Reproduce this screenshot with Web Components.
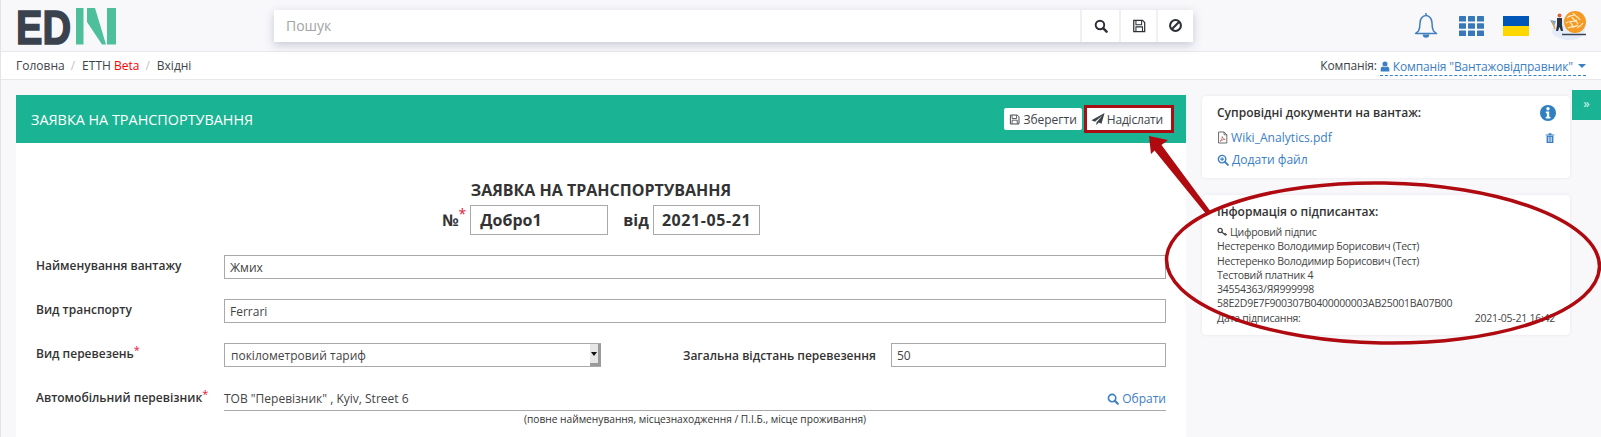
<!DOCTYPE html>
<html lang="uk">
<head>
<meta charset="utf-8">
<title>EDIN</title>
<style>
  html, body { margin: 0; height: 437px; overflow: hidden; background: #f8f8fb; }
  body { font-family: "Open Sans", "Noto Sans", sans-serif; font-size: 12px; color: #333; }
</style>
</head>
<body>
<edin-app></edin-app>

<script>
(function () {
  const icons = {
    search: '<svg viewBox="0 0 16 16"><circle cx="6.8" cy="6.8" r="4.9" fill="none" stroke="currentColor" stroke-width="2.2"/><path d="M10.4 10.4l4 4" stroke="currentColor" stroke-width="2.8" stroke-linecap="round"/></svg>',
    save: '<svg viewBox="0 0 16 16"><path d="M2 1.5h10l2.5 2.5v10.5h-12.5z" fill="none" stroke="currentColor" stroke-width="1.4"/><path d="M4.5 2v4.5h6.5v-4.5M4.5 14v-5h7.5v5" fill="none" stroke="currentColor" stroke-width="1.2"/></svg>',
    ban: '<svg viewBox="0 0 16 16"><circle cx="8" cy="8" r="5.8" fill="none" stroke="currentColor" stroke-width="2.2"/><path d="M4 12l8-8" stroke="currentColor" stroke-width="2.2"/></svg>',
    plane: '<svg viewBox="0 0 16 16"><path d="M15.5 1L.5 9.5l4 1.7L13 4 6.2 12v3l2.5-2.9 3.3 1.4z" fill="currentColor"/></svg>',
    pdf: '<svg viewBox="0 0 14 16"><path d="M2 1h7l3.5 3.5V15H2z" fill="none" stroke="currentColor" stroke-width="1.1"/><path d="M9 1v3.5h3.5" fill="none" stroke="currentColor"/><path d="M3.8 12.8c2-1 3-3.6 2.9-6 .9 2.3 1.9 3.4 3.7 3.7-2.2 0-4.5.9-6.6 2.3z" fill="none" stroke="#b5544f" stroke-width=".9"/></svg>',
    zoomin: '<svg viewBox="0 0 16 16"><circle cx="6.8" cy="6.8" r="5" fill="none" stroke="currentColor" stroke-width="1.9"/><path d="M10.5 10.5l4 4" stroke="currentColor" stroke-width="2.6" stroke-linecap="round"/><path d="M4.2 6.8h5.2M6.8 4.2v5.2" stroke="currentColor" stroke-width="1.5"/></svg>',
    trash: '<svg viewBox="0 0 14 16"><path d="M1 3h12v1.5H1zM5 1.2h4V3H5z" fill="currentColor"/><path d="M2.2 5h9.6v10H2.2z" fill="currentColor"/><path d="M5 6.5v7M7 6.5v7M9 6.5v7" stroke="#fff" stroke-width=".9"/></svg>',
    info: '<svg viewBox="0 0 16 16"><circle cx="8" cy="8" r="8" fill="currentColor"/><circle cx="8" cy="3.8" r="1.7" fill="#fff"/><path d="M5.8 6.5h3.4v5.2h1.2v1.8H5.8v-1.8h1.1V8.3H5.8z" fill="#fff"/></svg>',
    user: '<svg viewBox="0 0 12 14"><circle cx="6" cy="3.8" r="3.2" fill="currentColor"/><path d="M.5 13.5v-3c0-2.5 1.5-3.5 2.8-3.5.8.7 1.7 1 2.7 1s1.9-.3 2.7-1c1.3 0 2.8 1 2.8 3.500v3z" fill="currentColor"/></svg>',
    key: '<svg viewBox="0 0 14 12"><circle cx="4" cy="4" r="2.7" fill="none" stroke="currentColor" stroke-width="1.7"/><path d="M6 6l5 4M9.5 8.8l1.6-1.3M11 10l1.5-1.3" stroke="currentColor" stroke-width="1.6"/></svg>'
  };

  const ico = (name, w, h) => `<span style="display:inline-flex;width:${w}px;height:${h}px;flex:none">${icons[name].replace('<svg ', `<svg width="${w}" height="${h}" `)}</span>`;

  function define(tag, css, html) {
    const template = document.createElement('template');
    template.innerHTML = `<style>${css}</style>${html}`;
    customElements.define(tag, class extends HTMLElement {
      constructor() {
        super();
        this.attachShadow({ mode: 'open' });
        this.shadowRoot.appendChild(template.content.cloneNode(true));
      }
    });
  }

  // top bar
  define('edin-topbar', `
    :host { display: flex; align-items: center; height: 51px; border-bottom: 1px solid #e7e7ec; box-sizing: content-box; padding-left: 13px; }
    .logo { flex: none; width: 102px; height: 60px; margin: -5px 0; }
    .search { flex: none; display: flex; width: 919px; height: 32px; margin-left: 158px; background: #fff; box-shadow: 0 3px 9px rgba(70,80,110,.28); }
    .search .q { flex: 1; padding-left: 12px; font-size: 14px; line-height: 32px; color: #a4a4a4; }
    .search .b { flex: none; display: flex; align-items: center; justify-content: center; border-left: 2px solid #f0f0f0; color: #2d3036; box-sizing: border-box; }
    .icons { flex: none; display: flex; align-items: center; margin-left: 221px; }
  `, `
    <svg class="logo" viewBox="-4 -11 102 60" role="img" aria-label="EDIN">
      <text x="-2" y="37" font-family="Liberation Sans" font-weight="700" font-size="48" fill="#3a424e" stroke="#3a424e" stroke-width="1.6" textLength="55" lengthAdjust="spacingAndGlyphs">ED</text>
      <rect x="58" y="1" width="7.5" height="36.5" fill="#4dbf9b"/>
      <path d="M69 1h8l11 36.500h-4L69 15z" fill="#4dbf9b"/>
      <rect x="89" y="1" width="9" height="36.5" fill="#4dbf9b"/>
    </svg>
    <div class="search">
      <div class="q">Пошук</div>
      <div class="b" style="width:39px">${ico('search', 14, 14)}</div>
      <div class="b" style="width:37px">${ico('save', 14, 14)}</div>
      <div class="b" style="width:37px">${ico('ban', 15, 15)}</div>
    </div>
    <div class="icons">
      <svg width="24" height="27" viewBox="0 0 24 27" fill="none" stroke="#3f7fbf" stroke-width="1.5"><path d="M12 1v2.5M4.5 19c1-2 1.500-4 1.500-8 0-4 2.500-7.500 6-7.500s6 3.500 6 7.500c0 4 .5 6 1.500 8l3 2.500H1.500z" stroke-linejoin="round"/><path d="M9.500 22.500a2.500 2.500 0 0 0 5 0" fill="#3f7fbf"/></svg>
      <svg style="margin-left:21px" width="25" height="20" viewBox="0 0 25 20" fill="#3877b8"><rect width="7" height="5.5" rx=".6"/><rect x="9" width="7" height="5.5" rx=".6"/><rect x="18" width="7" height="5.5" rx=".6"/><rect y="7.2" width="7" height="5.5" rx=".6"/><rect x="9" y="7.2" width="7" height="5.5" rx=".6"/><rect x="18" y="7.2" width="7" height="5.5" rx=".6"/><rect y="14.5" width="7" height="5.5" rx=".6"/><rect x="9" y="14.5" width="7" height="5.5" rx=".6"/><rect x="18" y="14.5" width="7" height="5.5" rx=".6"/></svg>
      <svg style="margin-left:19px" width="26" height="20" viewBox="0 0 26 20"><rect width="26" height="10" fill="#0057b7"/><rect y="10" width="26" height="10" fill="#ffd700"/></svg>
      <svg style="margin-left:20px" width="38" height="33" viewBox="0 0 38 33">
        <path d="M3 22c0-6 8-9 13-14 5-6 14-8 18-2 4 7 3 17-1 21-5 5-14 5-20 3-5-2-10-3-10-8z" fill="#e4ecfa"/>
        <circle cx="26" cy="13" r="11" fill="#f59a23"/>
        <path d="M18 9c3-4 6-1 8-4M17 14c4-3 7 0 11-3M19 19c3-2 6 0 10-3M24 4c2 4 5 3 7 7M23 8c1 3 4 3 6 7M21 13c2 2 3 3 3 6M28 19c2-1 4-2 6-5" fill="none" stroke="#fdeccd" stroke-width="1.2"/>
        <path d="M13 25.5h24" stroke="#3b4453" stroke-width="1.5"/>
        <path d="M8 9h5v7l1 6h-2l-1.5-4-1.5 4H7l1-6z" fill="#2b3442"/>
        <circle cx="10.5" cy="6.5" r="2" fill="#d8623f"/>
        <path d="M1 11l6 1-2 6z" fill="#6fa6dc"/><path d="M3 12l3 8" stroke="#e0a13a" stroke-width="1.2"/>
      </svg>
    </div>
  `);

  // breadcrumb bar
  define('edin-breadcrumb', `
    :host { display: flex; align-items: center; height: 27px; padding: 0 15px; background: #fff; border-bottom: 1px solid #e7e7ec; white-space: nowrap; color: #3d4348; }
    .sep { color: #c4c4c4; margin: 0 7px 0 6px; }
    .beta { color: #f00; }
    .grow { flex: 1; }
    .company { display: inline-flex; align-items: center; gap: 3px; margin-left: 3px; color: #3c80c4; border-bottom: 1px dashed #3c80c4; height: 17px; margin-top: 2px; letter-spacing: -.15px; }
    .caret { width: 0; height: 0; border: 4px solid transparent; border-top-color: #3c80c4; border-bottom: 0; margin-left: 2px; }
    .lab { letter-spacing: -.15px; }
  `, `
    <span>Головна</span><span class="sep">/</span>
    <span>ЕТТН&nbsp;<span class="beta">Beta</span></span><span class="sep">/</span>
    <span>Вхідні</span>
    <span class="grow"></span>
    <span class="lab">Компанія:</span>
    <span class="company">${ico('user', 10, 11)}<span>Компанія "Вантажовідправник"</span><span class="caret"></span></span>
  `);

  // white field with gray border
  define('edin-field', `
    :host { display: block; box-sizing: border-box; height: 24px; padding: 0 5px; border: 1px solid #a9a9a9; background: #fff; line-height: 23px; font-size: 12px; color: #444; white-space: nowrap; }
    :host([big]) { height: 30px; padding: 0 9px; line-height: 28px; font-size: 16px; font-weight: 700; color: #333; }
  `, `<slot></slot>`);

  // imitation of the browser's old-style select
  define('edin-select', `
    :host { display: flex; box-sizing: border-box; height: 24px; border: 1px solid #a9a9a9; border-right: 0; background: #fff; line-height: 23px; padding-left: 6px; color: #444; }
    .t { flex: 1; white-space: nowrap; }
    .b { flex: none; width: 8px; background: #e6e6e6; border-right: 3px solid #9a9a9a; border-bottom: 3px solid #9a9a9a; display: flex; justify-content: center; align-items: center; }
    .a { width: 0; height: 0; border: 3px solid transparent; border-top: 4px solid #111; border-bottom: 0; }
  `, `<span class="t"><slot></slot></span><span class="b"><span class="a"></span></span>`);

  // form row: label + content
  define('edin-row', `
    :host { display: flex; align-items: center; margin-top: 20px; }
    .l { flex: none; width: 188px; font-weight: 600; font-size: 12px; color: #333; margin-top: -3px; white-space: nowrap; }
    .c { flex: 1; min-width: 0; display: flex; align-items: center; }
    ::slotted(*) { flex: 1; }
  `, `<div class="l"><slot name="label"></slot></div><div class="c"><slot></slot></div>`);

  // panel with the form
  define('edin-panel', `
    :host { display: block; flex: none; width: 1170px; height: 342px; background: #fff; }
    .head { display: flex; align-items: center; height: 48px; padding: 0 15px; background: #1ab394; }
    .head h2 { flex: 1; margin: 0; font-size: 14.4px; font-weight: 400; color: #fff; white-space: nowrap; }
    .btn { display: inline-flex; align-items: center; gap: 3px; box-sizing: border-box; height: 22px; padding: 0 5px; background: #fff; border-radius: 2px; color: #3d4348; white-space: nowrap; }
    .send { margin-left: 5px; padding: 0 8px 0 4px; gap: 2px; outline: 3px solid #a80f15; border-radius: 0; letter-spacing: -.2px; }
    .form { padding: 37px 20px 0 20px; }
    .title { text-align: center; font-size: 16px; font-weight: 700; line-height: 20px; color: #333; }
    .num { display: flex; justify-content: center; align-items: center; margin-top: 5px; font-size: 16px; font-weight: 700; color: #333; }
    .req { color: #e8173c; font-weight: 400; font-size: 11px; line-height: 0; vertical-align: 4px; }
    .num .sup { color: #e8173c; font-weight: 400; align-self: flex-start; margin: 2px 4px 0 0; font-size: 14px; line-height: 14px; }
    .hint { text-align: center; font-size: 10.2px; margin-left: 188px; line-height: 14px; color: #333; padding-top: 1px; }
    .carrier { flex: 1; display: flex; justify-content: space-between; align-items: center; height: 24px; border-bottom: 1px solid #a9a9a9; color: #444; box-sizing: border-box; }
    .pick { display: inline-flex; align-items: center; gap: 3px; color: #3c80c4; }
    .lab2 { flex: none; width: 192px; margin: 0 16px 0 82px; font-weight: 600; color: #333; white-space: nowrap; }
    .row3 { display: flex; flex: 1; align-items: center; }
  `, `
    <div class="head">
      <h2>ЗАЯВКА НА ТРАНСПОРТУВАННЯ</h2>
      <span class="btn">${ico('save', 11, 11)}<span>Зберегти</span></span>
      <span class="btn send">${ico('plane', 14, 14)}<span>Надіслати</span></span>
    </div>
    <div class="form">
      <div class="title">ЗАЯВКА НА ТРАНСПОРТУВАННЯ</div>
      <div class="num">
        <span>№</span><span class="sup">*</span>
        <edin-field big style="width:138px">Добро1</edin-field>
        <span style="margin:0 4px 0 15px">від</span>
        <edin-field big style="width:107px;padding:0 8px;letter-spacing:.6px">2021-05-21</edin-field>
      </div>
      <edin-row><span slot="label">Найменування вантажу</span><edin-field>Жмих</edin-field></edin-row>
      <edin-row><span slot="label">Вид транспорту</span><edin-field>Ferrari</edin-field></edin-row>
      <edin-row><span slot="label">Вид перевезень<span class="req">*</span></span>
        <div class="row3">
          <edin-select style="width:377px">покілометровий тариф</edin-select>
          <span class="lab2">Загальна відстань перевезення</span>
          <edin-field style="flex:1">50</edin-field>
        </div>
      </edin-row>
      <edin-row><span slot="label">Автомобільний перевізник<span class="req">*</span></span>
        <div class="carrier"><span>ТОВ "Перевізник" , Kyiv, Street 6</span><span class="pick">${ico('search', 12, 12)}<span>Обрати</span></span></div>
      </edin-row>
      <div class="hint">(повне найменування, місцезнаходження / П.І.Б., місце проживання)</div>
    </div>
  `);

  // right column card
  define('edin-card', `
    :host { display: block; box-sizing: border-box; width: 368px; padding: 8px 15px; background: #fff; border-radius: 4px; box-shadow: 0 0 3px rgba(80,90,120,.12); }
    .t { display: flex; justify-content: space-between; align-items: center; font-size: 12px; font-weight: 600; color: #333; line-height: 17px; }
  `, `<div class="t"><slot name="title"></slot></div><slot></slot>`);

  define('edin-docs', `
    :host { display: block; flex: none; width: 368px; margin: 1px 0 0 16px; }
    edin-card + edin-card { margin-top: 17px; }
    .info { color: #2f7fc1; display: inline-flex; margin-right: -1px; }
    .link { display: flex; align-items: center; gap: 3px; color: #3c80c4; font-size: 12.1px; line-height: 17px; }
    .pdf { color: #555; display: inline-flex; }
    .file { margin-top: 8px; }
    .add { margin-top: 5px; padding-bottom: 5px; }
    .trash { margin-left: auto; display: inline-flex; }
    .lines { margin-top: 5px; line-height: 14.3px; font-size: 10.5px; letter-spacing: -.25px; color: #444; white-space: nowrap; }
    .sig { display: flex; align-items: center; gap: 2px; }
    .date { display: flex; justify-content: space-between; }
  `, `
    <edin-card style="height:82px">
      <span slot="title" style="display:contents">
        <span>Супровідні документи на вантаж:</span>
        <span class="info">${ico('info', 16, 16)}</span>
      </span>
      <div class="link file"><span class="pdf">${ico('pdf', 11, 13)}</span><span>Wiki_Analytics.pdf</span><span class="trash">${ico('trash', 10, 12)}</span></div>
      <div class="link add">${ico('zoomin', 12, 12)}<span>Додати файл</span></div>
    </edin-card>
    <edin-card style="height:140px">
      <span slot="title">Інформація о підписантах:</span>
      <div class="lines">
        <div class="sig">${ico('key', 11, 10)}<span>Цифровий підпис</span></div>
        <div>Нестеренко Володимир Борисович (Тест)</div>
        <div>Нестеренко Володимир Борисович (Тест)</div>
        <div>Тестовий платник 4</div>
        <div>34554363/ЯЯ999998</div>
        <div>58E2D9E7F900307B0400000003AB25001BA07B00</div>
        <div class="date"><span>Дата підписання:</span><span>2021-05-21 16:42</span></div>
      </div>
    </edin-card>
  `);

  // page shell: bars, two columns and the red annotation laid over them
  define('edin-app', `
    :host { display: block; position: relative; height: 437px; overflow: hidden; border-left: 1px solid #e4e4e8; box-sizing: border-box; }
    .main { display: flex; padding: 15px 0 0 15px; }
    .toggle { position: absolute; right: 0; top: 90px; width: 29px; height: 30px; background: #1ab394; color: #d8f5ee; font-size: 13px; line-height: 27px; text-align: center; }
    .marks { position: absolute; left: -1px; top: 0; pointer-events: none; }
  `, `
    <edin-topbar></edin-topbar>
    <edin-breadcrumb></edin-breadcrumb>
    <div class="main"><edin-panel></edin-panel><edin-docs></edin-docs></div>
    <div class="toggle">»</div>
    <svg class="marks" width="1601" height="437" viewBox="0 0 1601 437">
      <ellipse cx="1383" cy="263" rx="216.5" ry="80" fill="none" stroke="#ae0a10" stroke-width="3.5" transform="rotate(1 1383 263)"/>
      <path d="M1149 136L1168 140L1161.5 145L1211 212L1207 215L1154.5 150.5L1151 154z" fill="#ae0a10"/>
    </svg>
  `);
})();
</script>
</body>
</html>
